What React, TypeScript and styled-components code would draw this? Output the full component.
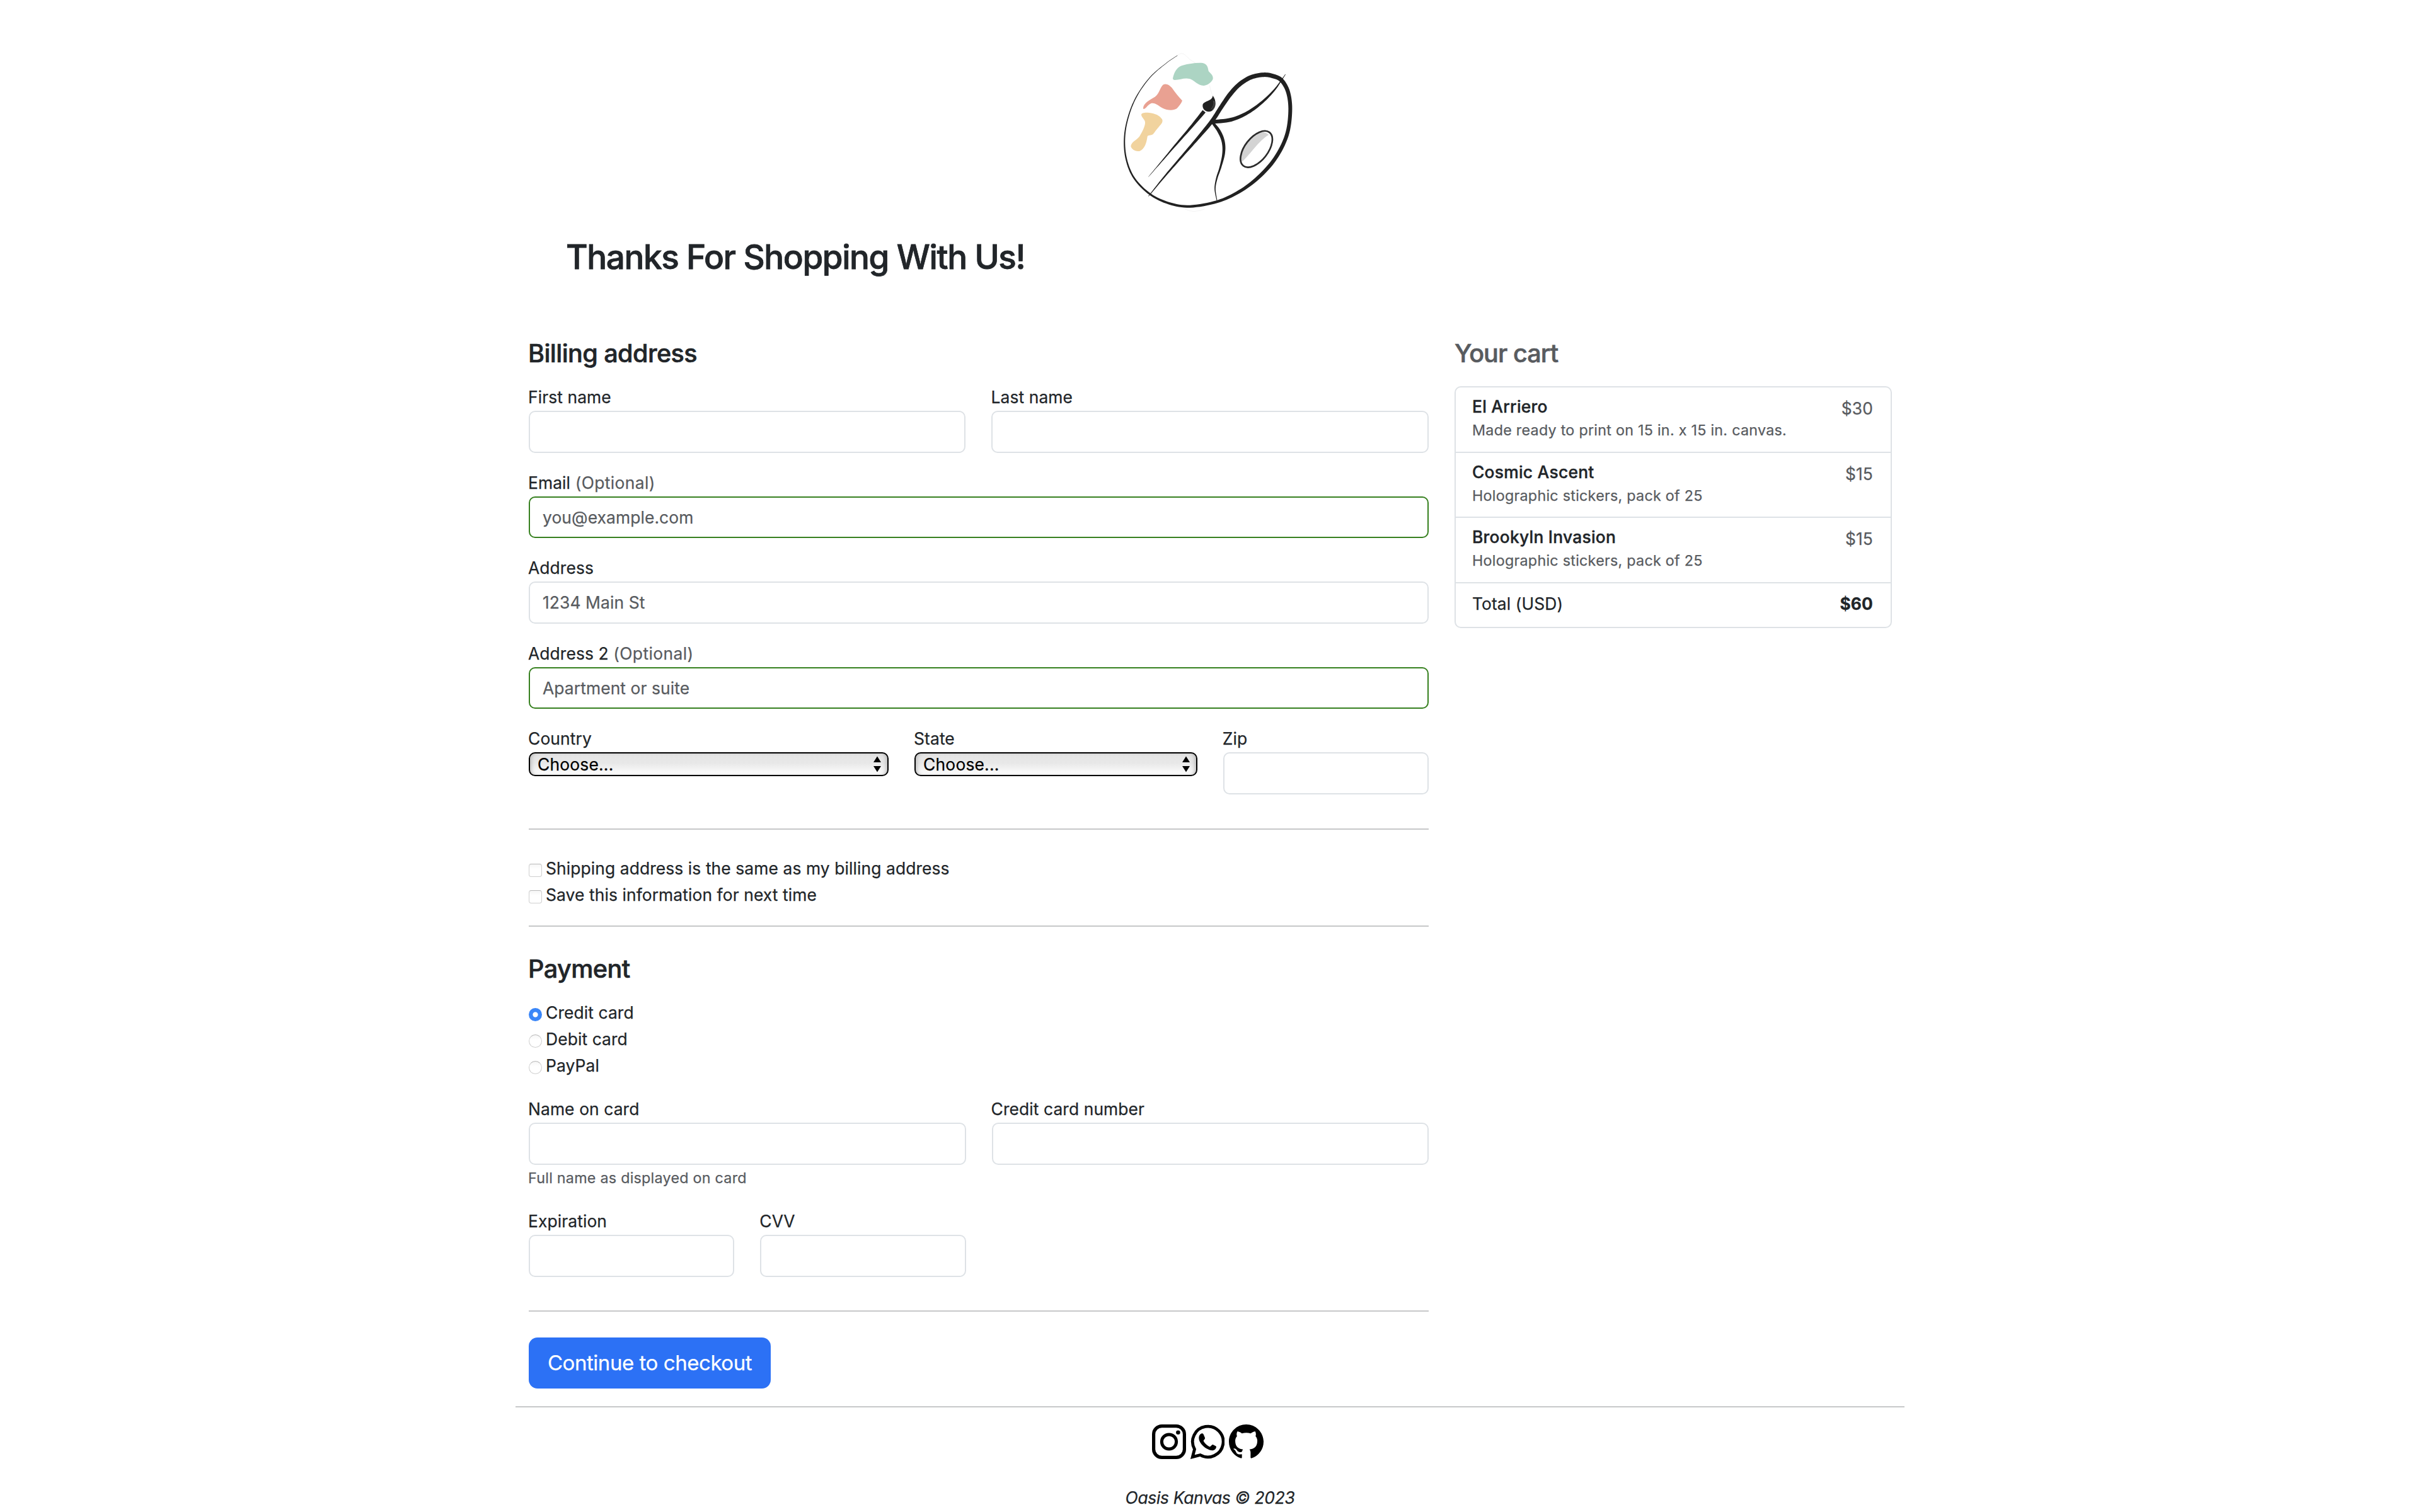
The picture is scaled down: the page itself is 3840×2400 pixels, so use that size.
import React from "react";
import styled, { createGlobalStyle } from "styled-components";

const GlobalStyle = createGlobalStyle`
  *, *::before, *::after { box-sizing: border-box; }
  body { margin: 0; background: #fff; }
`;

const Page = styled.div`
  width: 2204px;
  height: 2400px;
  overflow: hidden;
  margin: 0 auto;
  padding-top: 60px;
  font-family: Inter, "Liberation Sans", sans-serif;
  font-size: 26.4px;
  line-height: 41px;
  letter-spacing: 0.1px;
  -webkit-text-stroke-width: 0.25px;
  color: #212529;
`;
const Header = styled.header`
  display: flex;
  flex-direction: column;
  align-items: center;
`;
const Title = styled.h1`
  align-self: flex-start;
  margin: 16px 0 95px 80px;
  font-size: 53px;
  line-height: 65px;
  font-weight: 500;
  letter-spacing: -1.39px;
  -webkit-text-stroke-width: 0.8px;
`;
const Columns = styled.main`
  display: grid;
  grid-template-columns: 1428px 694px;
  justify-content: space-between;
  padding: 0 20px 0 21px;
`;
const Heading = styled.h2<{ $gap?: number }>`
  margin: 0 0 ${(p) => p.$gap ?? 24}px -1px;
  font-size: 39.6px;
  line-height: 51px;
  font-weight: 500;
  letter-spacing: -0.57px;
  -webkit-text-stroke-width: 0.6px;
`;
const CartHeading = styled(Heading)`
  margin-left: 0;
  letter-spacing: -0.95px;
  color: #585b5f;
`;
const Fields = styled.div`
  display: grid;
  grid-template-columns: repeat(12, 1fr);
  gap: 28px 41px;
`;
const FieldBox = styled.div<{ $span: number }>`
  grid-column: span ${(p) => p.$span};
  display: flex;
  flex-direction: column;
`;
const Label = styled.label`
  height: 41px;
  margin-left: -1px;
  line-height: 39px;
`;
const Optional = styled.span`
  letter-spacing: 0.4px;
  color: #585b5f;
`;
const Price = styled.span`
  color: #585b5f;
`;
const Help = styled.small`
  height: 42.5px;
  margin-left: -1px;
  font-size: 23.3px;
  line-height: 42px;
  letter-spacing: 0.25px;
  color: #585b5f;
`;
const Input = styled.input<{ $valid?: boolean }>`
  width: 100%;
  height: 66.5px;
  padding: 0 20px;
  border: 2px solid ${(p) => (p.$valid ? "#36801f" : "#dee2e6")};
  border-radius: 10px;
  background: #fff;
  font: inherit;
  letter-spacing: inherit;
  outline: none;
  &::placeholder { color: #585b5f; opacity: 1; }
`;
const SelectWrap = styled.div`
  position: relative;
  height: 38px;
`;
const Select = styled.select`
  display: block;
  appearance: none;
  width: 100%;
  height: 38px;
  padding: 0 12px;
  border: 2px solid #000;
  border-radius: 10px;
  background: linear-gradient(#e4e4e4, #e8e8e8 45%, #fefefe);
  box-shadow: inset 5px 0 7px -4px #aaa, inset -5px 0 7px -4px #aaa;
  font: inherit;
  letter-spacing: 0.2px;
  line-height: 34px;
  color: #000;
`;
const Arrows = styled.svg`
  position: absolute;
  right: 12px;
  top: 6px;
  width: 12px;
  height: 26px;
`;
const Rule = styled.hr<{ $top: number; $bottom: number }>`
  margin: ${(p) => p.$top}px 0 ${(p) => p.$bottom}px;
  height: 2px;
  border: 0;
  background: #c7c8c9;
`;
const Choices = styled.div<{ $bottom?: number }>`
  display: flex;
  flex-direction: column;
  margin-bottom: ${(p) => p.$bottom ?? 0}px;
`;
const Choice = styled.label`
  display: flex;
  align-items: center;
  gap: 6px;
  height: 42px;
`;
const Mark = styled.input`
  appearance: none;
  width: 21px;
  height: 21px;
  margin: 6px 0 0;
  border: 1px solid #cfcfcf;
  border-top-color: #b9b9b9;
  border-radius: ${(p) => (p.type === "radio" ? "50%" : "4px")};
  background: linear-gradient(#f6f6f6, #fff 40%);
  &:checked {
    border: 0;
    background: radial-gradient(circle, #fff 0 3.6px, #3a86f8 4.6px);
  }
`;
const Submit = styled.button`
  width: 384px;
  height: 81px;
  border: 0;
  border-radius: 14px;
  padding: 0;
  background: #2c71f5;
  color: #fff;
  font: inherit;
  font-size: 33px;
  letter-spacing: -0.45px;
`;
const CartList = styled.ul`
  margin: 0;
  padding: 0;
  list-style: none;
  border: 2px solid #dee2e6;
  border-radius: 10px;
`;
const CartItem = styled.li`
  display: flex;
  justify-content: space-between;
  height: 103.5px;
  padding: 13px 28px 0 26px;
  border-bottom: 2px solid #dee2e6;
`;
const CartTotal = styled(CartItem)`
  height: 69px;
  padding-top: 12px;
  border-bottom: 0;
`;
const ItemText = styled.div`
  display: flex;
  flex-direction: column;
`;
const ItemName = styled.h3`
  margin: 0;
  font-size: 26.4px;
  line-height: 35px;
  font-weight: 500;
  letter-spacing: 0.25px;
  -webkit-text-stroke-width: 0.4px;
`;
const ItemNote = styled.small`
  font-size: 23.3px;
  line-height: 40px;
  letter-spacing: 0.26px;
  color: #585b5f;
`;
const Footer = styled.footer`
  display: flex;
  flex-direction: column;
  align-items: center;
`;
const Social = styled.div`
  display: flex;
  gap: 7px;
  width: 100%;
  justify-content: center;
  padding-right: 8px;
`;
const Copyright = styled.p`
  margin: 41px 0 0;
  font-style: italic;
  letter-spacing: -0.3px;
`;

type Pt = [number, number, number];

/** Outline of a brush stroke whose width changes along its points (x, y, width). */
function stroke(pts: Pt[]): string {
  const s: Pt[] = [];
  const n = pts.length;
  for (let i = 0; i < n - 1; i++) {
    const a = pts[Math.max(i - 1, 0)], b = pts[i], c = pts[i + 1], d = pts[Math.min(i + 2, n - 1)];
    for (let k = 0; k < 8; k++) {
      const t = k / 8;
      const f = (j: number) =>
        0.5 * (2 * b[j] + (c[j] - a[j]) * t + (2 * a[j] - 5 * b[j] + 4 * c[j] - d[j]) * t * t + (3 * b[j] - a[j] - 3 * c[j] + d[j]) * t * t * t);
      s.push([f(0), f(1), f(2)]);
    }
  }
  s.push(pts[n - 1]);
  const l: string[] = [], r: string[] = [];
  s.forEach((p, i) => {
    const u = s[Math.max(i - 1, 0)], v = s[Math.min(i + 1, s.length - 1)];
    const dx = v[0] - u[0], dy = v[1] - u[1], m = Math.hypot(dx, dy) || 1;
    const nx = (-dy / m) * (p[2] / 2), ny = (dx / m) * (p[2] / 2);
    l.push(`${(p[0] + nx).toFixed(1)} ${(p[1] + ny).toFixed(1)}`);
    r.unshift(`${(p[0] - nx).toFixed(1)} ${(p[1] - ny).toFixed(1)}`);
  });
  return `M${l.concat(r).join("L")}Z`;
}

const RIM: Pt[] = [[385,84,1.5],[330,122,2],[255,188,3],[190,280,4],[150,380,5],[133,480,6],[142,580,7],[180,670,8],[255,745,9],[345,788,11],[445,803,12],[575,780,13],[680,732,15],[770,665,17],[850,575,18],[905,465,18],[922,350,18],[912,260,19],[880,202,20],[838,182,21],[795,176,21],[735,188,21],[680,222,21],[635,270,21],[590,335,20],[550,396,19],[480,480,14],[400,572,10],[320,665,7],[255,745,3],[247,753,1]];
const LEG: Pt[] = [[546,396,12],[583,445,16],[603,495,15],[605,550,13],[590,615,9],[572,670,7],[564,720,5],[573,775,3]];
const LOOP: Pt[] = [[552,400,18],[640,390,18],[720,356,15],[790,305,12],[845,250,8],[878,205,4],[899,174,2]];
const HANDLE: Pt[] = [[247,662,1],[300,600,4],[385,500,9],[450,425,13],[512,350,18]];

const Logo = () => (
  <svg width="360" height="300" viewBox="0 0 1080 900">
    <path fill="#acd4c3" d="M363 193C370 160 385 137 410 131C440 124 470 118 505 120C526 124 530 140 533 158C544 172 556 178 554 196C548 212 530 226 510 228C480 226 468 205 445 196C420 188 400 200 372 201C366 201 363 198 363 193Z" />
    <path fill="#e9a192" d="M222 334C224 312 250 297 278 281C300 266 302 235 318 223C332 216 348 226 360 240C375 262 390 280 408 299C402 315 392 325 382 337C365 348 335 345 315 335C295 325 280 308 260 312C245 318 238 334 226 339C222 339 221 337 222 334Z" />
    <path fill="#f1d39e" d="M213 366C214 357 232 355 250 357C280 360 300 370 312 388C318 400 308 412 298 422C285 436 278 448 268 460C260 466 245 462 242 470C238 500 228 530 206 539C190 543 168 535 163 517C165 495 190 488 204 470C218 448 232 420 231 402C230 388 214 380 213 366Z" />
    <g fill="#212121">
      <path d={stroke(RIM)} />
      <path d={stroke(LEG)} />
      <path d={stroke(LOOP)} />
      <path d={stroke(HANDLE)} />
      <path d="M553 275C571 298 572 332 549 348C528 358 504 346 505 322C507 298 552 304 553 275Z" />
    </g>
    <path fill="none" stroke="#888" strokeWidth="1.5" d="M556 300C560 318 555 330 545 340M562 302C566 320 560 334 550 344" />
    <path fill="none" stroke="#e6e6e6" strokeWidth="1.5" d="M385 84Q402 68 420 80Q445 108 470 120M538 226Q543 255 551 272M420 815Q460 838 515 815" />
    <path fill="#d3d3d3" d="M692 590C680 560 700 500 745 466C775 444 800 444 820 462C770 490 730 560 692 590Z" />
    <ellipse cx="761" cy="530" rx="101" ry="55" transform="rotate(-52 761 530)" fill="none" stroke="#2b2b2b" strokeWidth="8" />
  </svg>
);

const Instagram = () => (
  <svg width="54" height="55" viewBox="0 0 54 55">
    <rect x="2.6" y="2.6" width="48.8" height="49.8" rx="13" fill="none" stroke="#000" strokeWidth="5.2" />
    <circle cx="27" cy="27.5" r="11.6" fill="none" stroke="#000" strokeWidth="5" />
    <circle cx="41.4" cy="12.8" r="3.3" />
  </svg>
);
const WhatsApp = () => (
  <svg width="54" height="55" viewBox="0 0 54 55">
    <path fill="none" stroke="#000" strokeWidth="4.8" d="M3.3 51.6L6.5 39.3A24.3 24.3 0 1 1 15.6 48.5Z" />
    <path d="M16 15.3C18 13.6 20 14.2 20.8 16L23 21.2C23.5 23 21 24.6 20.6 26C22.5 30 26.5 33.8 30.8 35.4C32.2 35.2 33.8 31.6 35.6 32L40.4 34.4C41.6 35.4 40.6 38.6 38.6 40C35 42.4 30.4 41 26 38.6C21 35.8 16.6 31 14.4 26.4C12.6 22.4 13 18 16 15.3Z" />
  </svg>
);
const GitHub = () => (
  <svg width="55" height="55" viewBox="0 0 16 16">
    <path d="M8 0C3.58 0 0 3.58 0 8c0 3.54 2.29 6.53 5.47 7.59.4.07.55-.17.55-.38 0-.19-.01-.82-.01-1.49-2.01.37-2.53-.49-2.69-.94-.09-.23-.48-.94-.82-1.13-.28-.15-.68-.52-.01-.53.63-.01 1.08.58 1.23.82.72 1.21 1.87.87 2.33.66.07-.52.28-.87.51-1.07-1.78-.2-3.64-.89-3.64-3.95 0-.87.31-1.59.82-2.15-.08-.2-.36-1.02.08-2.12 0 0 .67-.21 2.2.82.64-.18 1.32-.27 2-.27s1.36.09 2 .27c1.53-1.04 2.2-.82 2.2-.82.44 1.1.16 1.92.08 2.12.51.56.82 1.27.82 2.15 0 3.07-1.87 3.75-3.65 3.95.29.25.54.73.54 1.48 0 1.07-.01 1.93-.01 2.2 0 .21.15.46.55.38A8.01 8.01 0 0 0 16 8c0-4.42-3.58-8-8-8" />
  </svg>
);

interface FieldProps {
  label: string;
  span: number;
  optional?: boolean;
  hint?: string;
  help?: string;
}

const Field = ({ label, span, optional, hint, help }: FieldProps) => (
  <FieldBox $span={span}>
    <Label>{label}{optional && <> <Optional>(Optional)</Optional></>}</Label>
    <Input placeholder={hint} $valid={optional} />
    {help && <Help>{help}</Help>}
  </FieldBox>
);
const SelectField = ({ label, span }: { label: string; span: number }) => (
  <FieldBox $span={span}>
    <Label>{label}</Label>
    <SelectWrap>
      <Select><option>Choose...</option></Select>
      <Arrows viewBox="0 0 12 26"><path d="M6 0.5L12 10H0ZM6 25.5L12 16H0Z" /></Arrows>
    </SelectWrap>
  </FieldBox>
);

const CART = [
  { name: "El Arriero", note: "Made ready to print on 15 in. x 15 in. canvas.", price: "$30" },
  { name: "Cosmic Ascent", note: "Holographic stickers, pack of 25", price: "$15" },
  { name: "Brookyln Invasion", note: "Holographic stickers, pack of 25", price: "$15" },
];

export default function App() {
  return (
    <>
      <GlobalStyle />
      <Page>
        <Header>
          <Logo />
          <Title>Thanks For Shopping With Us!</Title>
        </Header>
        <Columns>
          <section>
            <Heading>Billing address</Heading>
            <Fields>
              <Field label="First name" span={6} />
              <Field label="Last name" span={6} />
              <Field label="Email" span={12} optional hint="you@example.com" />
              <Field label="Address" span={12} hint="1234 Main St" />
              <Field label="Address 2" span={12} optional hint="Apartment or suite" />
              <SelectField label="Country" span={5} />
              <SelectField label="State" span={4} />
              <Field label="Zip" span={3} />
            </Fields>
            <Rule $top={54.5} $bottom={40.5} />
            <Choices>
              <Choice><Mark type="checkbox" />Shipping address is the same as my billing address</Choice>
              <Choice><Mark type="checkbox" />Save this information for next time</Choice>
            </Choices>
            <Rule $top={27.5} $bottom={42} />
            <Heading $gap={22.5}>Payment</Heading>
            <Choices $bottom={28.5}>
              <Choice><Mark type="radio" name="method" defaultChecked />Credit card</Choice>
              <Choice><Mark type="radio" name="method" />Debit card</Choice>
              <Choice><Mark type="radio" name="method" />PayPal</Choice>
            </Choices>
            <Fields>
              <Field label="Name on card" span={6} help="Full name as displayed on card" />
              <Field label="Credit card number" span={6} />
              <Field label="Expiration" span={3} />
              <Field label="CVV" span={3} />
            </Fields>
            <Rule $top={53.5} $bottom={41} />
            <Submit>Continue to checkout</Submit>
          </section>
          <aside>
            <CartHeading $gap={26}>Your cart</CartHeading>
            <CartList>
              {CART.map((item) => (
                <CartItem key={item.name}>
                  <ItemText>
                    <ItemName>{item.name}</ItemName>
                    <ItemNote>{item.note}</ItemNote>
                  </ItemText>
                  <Price>{item.price}</Price>
                </CartItem>
              ))}
              <CartTotal>
                <span>Total (USD)</span>
                <strong>$60</strong>
              </CartTotal>
            </CartList>
          </aside>
        </Columns>
        <Rule $top={28} $bottom={27} />
        <Footer>
          <Social><Instagram /><WhatsApp /><GitHub /></Social>
          <Copyright>Oasis Kanvas © 2023</Copyright>
        </Footer>
      </Page>
    </>
  );
}
